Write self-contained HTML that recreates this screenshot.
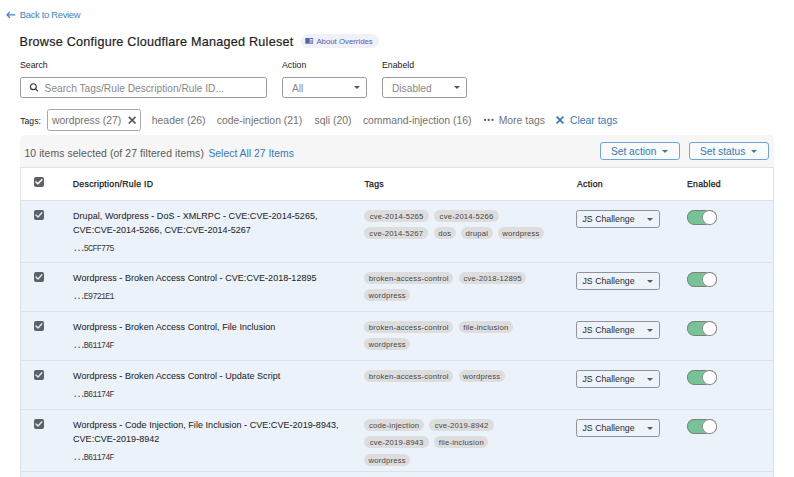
<!DOCTYPE html>
<html><head><meta charset="utf-8">
<style>
*{box-sizing:border-box;margin:0;padding:0}
html,body{width:794px;height:477px;overflow:hidden;background:#fff}
body{font-family:"Liberation Sans",sans-serif;color:#222;position:relative}
.a{position:absolute;white-space:nowrap}
.back{left:19.8px;top:9.8px;font-size:9.4px;line-height:9.4px;letter-spacing:-0.3px;color:#3f84c2}
.arrow{position:absolute;left:4px;top:8px}
.title{left:19.5px;top:36.2px;font-size:12.6px;line-height:12.6px;letter-spacing:0.25px;color:#1e1e1e;-webkit-text-stroke:0.2px #1e1e1e}
.badge{left:300.5px;top:34.4px;width:78px;height:13.5px;border-radius:7px;background:#eff0f8}
.badgetxt{left:316.4px;top:37.6px;font-size:7.8px;line-height:7.8px;color:#5361b3}
.lbl{font-size:8.75px;line-height:8.75px;color:#222}
.input{position:absolute;border:1px solid #9a9a9a;border-radius:2.5px;height:20.5px;background:#fff}
.ph{font-size:10.2px;line-height:10.2px;color:#888}
.tr{font-size:10.4px;line-height:10.4px;color:#727272;top:116px}
.panel{position:absolute;left:20px;top:135px;width:753.5px;height:345px;background:#f6f6f6;border-radius:5px 5px 0 0}
.tbl{position:absolute;left:20px;top:167.3px;width:753.5px;height:320px;background:#fff;border:1px solid #e2e2e2;border-bottom:none}
.row{position:absolute;left:20px;width:753.5px;background:#ebf2fa;border:1px solid #dde2e6;border-bottom:none}
.cb{position:absolute;left:34px;width:10px;height:10px}
.hdr{font-size:8.7px;line-height:8.7px;font-weight:400;color:#161616;-webkit-text-stroke:0.25px #161616;letter-spacing:0.3px;top:179.6px}
.desc{font-size:9px;line-height:9px;letter-spacing:0.05px;color:#262626;-webkit-text-stroke:0.05px #262626}
.rid{font-family:"Liberation Mono",monospace;font-size:8.4px;line-height:8.4px;letter-spacing:-0.75px;color:#3a3a3a}
.dots{letter-spacing:-1.35px}
.chip{position:absolute;background:#dddddd;border-radius:6px;font-size:7.7px;letter-spacing:0.2px;color:#474747;height:12px;line-height:13px;text-align:center;white-space:nowrap}
.sel{position:absolute;left:576.3px;width:83.6px;height:17.8px;border:1px solid #8e939b;border-radius:2.5px;background:#eef3fa;font-size:8.75px;line-height:17.8px;padding-left:5.2px;color:#2a2a2a;white-space:nowrap}
.tri{position:absolute;right:5.9px;top:6.6px;width:0;height:0;border-left:3.1px solid transparent;border-right:3.1px solid transparent;border-top:3.3px solid #5a5a5a}
.tog{position:absolute;left:687.2px;width:29.6px;height:14.7px;border-radius:7.4px;background:#76c495;box-shadow:inset 0 0 0 0.9px #7b807c}
.tog i{position:absolute;right:0;top:0;width:14.7px;height:14.7px;border-radius:50%;background:#fff;box-shadow:inset 0 0 0 0.9px #808080}
.btn{position:absolute;top:142.2px;height:17.8px;border:1px solid #6ea6d8;border-radius:3px;background:#fafafa}
.btxt{font-size:10.2px;line-height:10.2px;color:#3479b8;top:147.3px}
.btri{position:absolute;width:0;height:0;border-left:3.4px solid transparent;border-right:3.4px solid transparent;border-top:3.6px solid #3479b8;top:149.9px}
</style></head>
<body>
<svg class="arrow" width="20" height="12" viewBox="0 0 20 12"><path d="M5.5 4.3 L3 6.9 L5.5 9.5 M3 6.9 H10.8" fill="none" stroke="#3f84c2" stroke-width="1.25" stroke-linecap="round" stroke-linejoin="round"/></svg>
<div class="a back">Back to Review</div>
<div class="a title">Browse Configure Cloudflare Managed Ruleset</div>
<div class="a badge"></div>
<svg class="a" style="left:305px;top:38px" width="9" height="6" viewBox="0 0 9 6"><rect x="0.3" y="0" width="3.9" height="5.8" rx="0.4" fill="#5862b3"/><rect x="4.3" y="0" width="3.8" height="5.8" rx="0.4" fill="#5862b3"/><rect x="4.9" y="1.2" width="2.7" height="4" fill="#a6addc"/><rect x="5" y="1.1" width="2.5" height="0.9" fill="#f2f3fb"/></svg>
<div class="a badgetxt">About Overrides</div>

<div class="a lbl" style="left:20px;top:61.1px">Search</div>
<div class="a lbl" style="left:282px;top:61.1px">Action</div>
<div class="a lbl" style="left:382px;top:61.1px">Enabeld</div>

<div class="input" style="left:20.3px;top:77.2px;width:246.5px"></div>
<svg class="a" style="left:29px;top:83px" width="10" height="10" viewBox="0 0 10 10"><circle cx="4.35" cy="3.7" r="2.95" fill="none" stroke="#333" stroke-width="1.2"/><path d="M6.5 5.9 L8.6 7.9" stroke="#333" stroke-width="1.3" stroke-linecap="round"/></svg>
<div class="a ph" style="left:44.6px;top:83.8px">Search Tags/Rule Description/Rule ID...</div>
<div class="input" style="left:282.3px;top:77.2px;width:84.7px"></div>
<div class="a ph" style="left:292px;top:83.8px">All</div>
<i class="btri" style="left:354.3px;top:86.2px;border-top-color:#555"></i>
<div class="input" style="left:382.3px;top:77.2px;width:84.7px"></div>
<div class="a ph" style="left:392px;top:83.8px">Disabled</div>
<i class="btri" style="left:454.3px;top:86.2px;border-top-color:#555"></i>

<div class="a" style="left:20.3px;top:116.6px;font-size:8.6px;line-height:8.6px;color:#222">Tags:</div>
<div class="input" style="left:46.8px;top:109px;width:94.7px;height:21.6px;border-color:#a8a8a8"></div>
<div class="a tr" style="left:52px">wordpress (27)</div>
<svg class="a" style="left:128px;top:116px" width="9" height="9" viewBox="0 0 9 9"><path d="M1.4 1.4 L6.9 6.9 M6.9 1.4 L1.4 6.9" stroke="#585d64" stroke-width="1.7" stroke-linecap="square"/></svg>
<div class="a tr" style="left:151.8px">header (26)</div>
<div class="a tr" style="left:216.8px">code-injection (21)</div>
<div class="a tr" style="left:314.5px">sqli (20)</div>
<div class="a tr" style="left:362.9px">command-injection (16)</div>
<svg class="a" style="left:483px;top:118px" width="11" height="4" viewBox="0 0 11 4"><circle cx="2" cy="1.9" r="1.15" fill="#555b62"/><circle cx="5.7" cy="1.9" r="1.15" fill="#555b62"/><circle cx="9.5" cy="1.9" r="1.15" fill="#555b62"/></svg>
<div class="a tr" style="left:498.7px">More tags</div>
<svg class="a" style="left:556px;top:116px" width="9" height="9" viewBox="0 0 9 9"><path d="M1.2 1.2 L6.8 6.8 M6.8 1.2 L1.2 6.8" stroke="#3079b8" stroke-width="1.7" stroke-linecap="square"/></svg>
<div class="a tr" style="left:570px;color:#3479b8">Clear tags</div>

<div class="panel"></div>
<div class="a" style="left:24.4px;top:148.8px;font-size:10.4px;line-height:10.4px;letter-spacing:0.1px;color:#595959">10 items selected (of 27 filtered items)</div>
<div class="a" style="left:208.4px;top:148.8px;font-size:10.4px;line-height:10.4px;color:#3479b8">Select All 27 Items</div>
<div class="btn" style="left:600.3px;width:79.3px"></div>
<div class="a btxt" style="left:611px">Set action</div>
<i class="btri" style="left:662px"></i>
<div class="btn" style="left:689.4px;width:79.3px"></div>
<div class="a btxt" style="left:700px">Set status</div>
<i class="btri" style="left:751px"></i>

<div class="tbl"></div>
<svg class="cb" style="top:177.2px" viewBox="0 0 10 10"><rect width="10" height="10" rx="2" fill="#5d6166"/><path d="M1.9 5 L3.9 6.8 L7.9 2.7" fill="none" stroke="#fff" stroke-width="1.55" stroke-linecap="round" stroke-linejoin="round"/></svg>
<div class="a hdr" style="left:72.8px">Description/Rule ID</div>
<div class="a hdr" style="left:364.4px">Tags</div>
<div class="a hdr" style="left:577px">Action</div>
<div class="a hdr" style="left:687px">Enabled</div>

<div class="row" style="top:200px;height:63px"></div>
<svg class="cb" style="top:210.40px" viewBox="0 0 10 10"><rect width="10" height="10" rx="2" fill="#5d6166"/><path d="M2 5.1 L4.1 7 L7.9 2.8" fill="none" stroke="#dbe7f4" stroke-width="1.45" stroke-linecap="round" stroke-linejoin="round"/></svg>
<div class="a desc" style="left:73px;top:211.78px">Drupal, Wordpress - DoS - XMLRPC - CVE:CVE-2014-5265,</div>
<div class="a desc" style="left:73px;top:225.58px">CVE:CVE-2014-5266, CVE:CVE-2014-5267</div>
<div class="a rid" style="left:72.8px;top:244.59px"><span class="dots">...</span>5CFF775</div>
<div class="chip" style="left:364.3px;top:210.00px;width:64.7px">cve-2014-5265</div>
<div class="chip" style="left:434.3px;top:210.00px;width:64.5px">cve-2014-5266</div>
<div class="chip" style="left:364.3px;top:227.30px;width:64.0px">cve-2014-5267</div>
<div class="chip" style="left:433.6px;top:227.30px;width:22.4px">dos</div>
<div class="chip" style="left:461px;top:227.30px;width:31.8px">drupal</div>
<div class="chip" style="left:498px;top:227.30px;width:45.9px">wordpress</div>
<div class="sel" style="top:210.10px">JS Challenge<i class="tri"></i></div>
<div class="tog" style="top:210.10px"><i></i></div>
<div class="row" style="top:262px;height:50px"></div>
<svg class="cb" style="top:272.40px" viewBox="0 0 10 10"><rect width="10" height="10" rx="2" fill="#5d6166"/><path d="M2 5.1 L4.1 7 L7.9 2.8" fill="none" stroke="#dbe7f4" stroke-width="1.45" stroke-linecap="round" stroke-linejoin="round"/></svg>
<div class="a desc" style="left:73px;top:273.78px">Wordpress - Broken Access Control - CVE:CVE-2018-12895</div>
<div class="a rid" style="left:72.8px;top:292.79px"><span class="dots">...</span>E9721E1</div>
<div class="chip" style="left:364.3px;top:272.00px;width:88.9px">broken-access-control</div>
<div class="chip" style="left:458.8px;top:272.00px;width:67.7px">cve-2018-12895</div>
<div class="chip" style="left:364.3px;top:289.30px;width:45.6px">wordpress</div>
<div class="sel" style="top:272.10px">JS Challenge<i class="tri"></i></div>
<div class="tog" style="top:272.10px"><i></i></div>
<div class="row" style="top:311px;height:50px"></div>
<svg class="cb" style="top:321.40px" viewBox="0 0 10 10"><rect width="10" height="10" rx="2" fill="#5d6166"/><path d="M2 5.1 L4.1 7 L7.9 2.8" fill="none" stroke="#dbe7f4" stroke-width="1.45" stroke-linecap="round" stroke-linejoin="round"/></svg>
<div class="a desc" style="left:73px;top:322.78px">Wordpress - Broken Access Control, File Inclusion</div>
<div class="a rid" style="left:72.8px;top:341.79px"><span class="dots">...</span>B61174F</div>
<div class="chip" style="left:364.3px;top:321.00px;width:88.9px">broken-access-control</div>
<div class="chip" style="left:458.8px;top:321.00px;width:54.2px">file-inclusion</div>
<div class="chip" style="left:364.3px;top:338.30px;width:45.6px">wordpress</div>
<div class="sel" style="top:321.10px">JS Challenge<i class="tri"></i></div>
<div class="tog" style="top:321.10px"><i></i></div>
<div class="row" style="top:360px;height:50px"></div>
<svg class="cb" style="top:370.40px" viewBox="0 0 10 10"><rect width="10" height="10" rx="2" fill="#5d6166"/><path d="M2 5.1 L4.1 7 L7.9 2.8" fill="none" stroke="#dbe7f4" stroke-width="1.45" stroke-linecap="round" stroke-linejoin="round"/></svg>
<div class="a desc" style="left:73px;top:371.78px">Wordpress - Broken Access Control - Update Script</div>
<div class="a rid" style="left:72.8px;top:390.79px"><span class="dots">...</span>B61174F</div>
<div class="chip" style="left:364.3px;top:370.00px;width:88.9px">broken-access-control</div>
<div class="chip" style="left:458.8px;top:370.00px;width:45.8px">wordpress</div>
<div class="sel" style="top:370.10px">JS Challenge<i class="tri"></i></div>
<div class="tog" style="top:370.10px"><i></i></div>
<div class="row" style="top:409px;height:63px"></div>
<svg class="cb" style="top:419.40px" viewBox="0 0 10 10"><rect width="10" height="10" rx="2" fill="#5d6166"/><path d="M2 5.1 L4.1 7 L7.9 2.8" fill="none" stroke="#dbe7f4" stroke-width="1.45" stroke-linecap="round" stroke-linejoin="round"/></svg>
<div class="a desc" style="left:73px;top:420.78px">Wordpress - Code Injection, File Inclusion - CVE:CVE-2019-8943,</div>
<div class="a desc" style="left:73px;top:434.58px">CVE:CVE-2019-8942</div>
<div class="a rid" style="left:72.8px;top:453.59px"><span class="dots">...</span>B61174F</div>
<div class="chip" style="left:364.3px;top:419.00px;width:59.7px">code-injection</div>
<div class="chip" style="left:429.3px;top:419.00px;width:64.7px">cve-2019-8942</div>
<div class="chip" style="left:364.3px;top:436.30px;width:64.7px">cve-2019-8943</div>
<div class="chip" style="left:434.3px;top:436.30px;width:54.2px">file-inclusion</div>
<div class="chip" style="left:364.3px;top:453.60px;width:45.6px">wordpress</div>
<div class="sel" style="top:419.10px">JS Challenge<i class="tri"></i></div>
<div class="tog" style="top:419.10px"><i></i></div>
<div class="row" style="top:471px;height:11px"></div>
</body></html>
